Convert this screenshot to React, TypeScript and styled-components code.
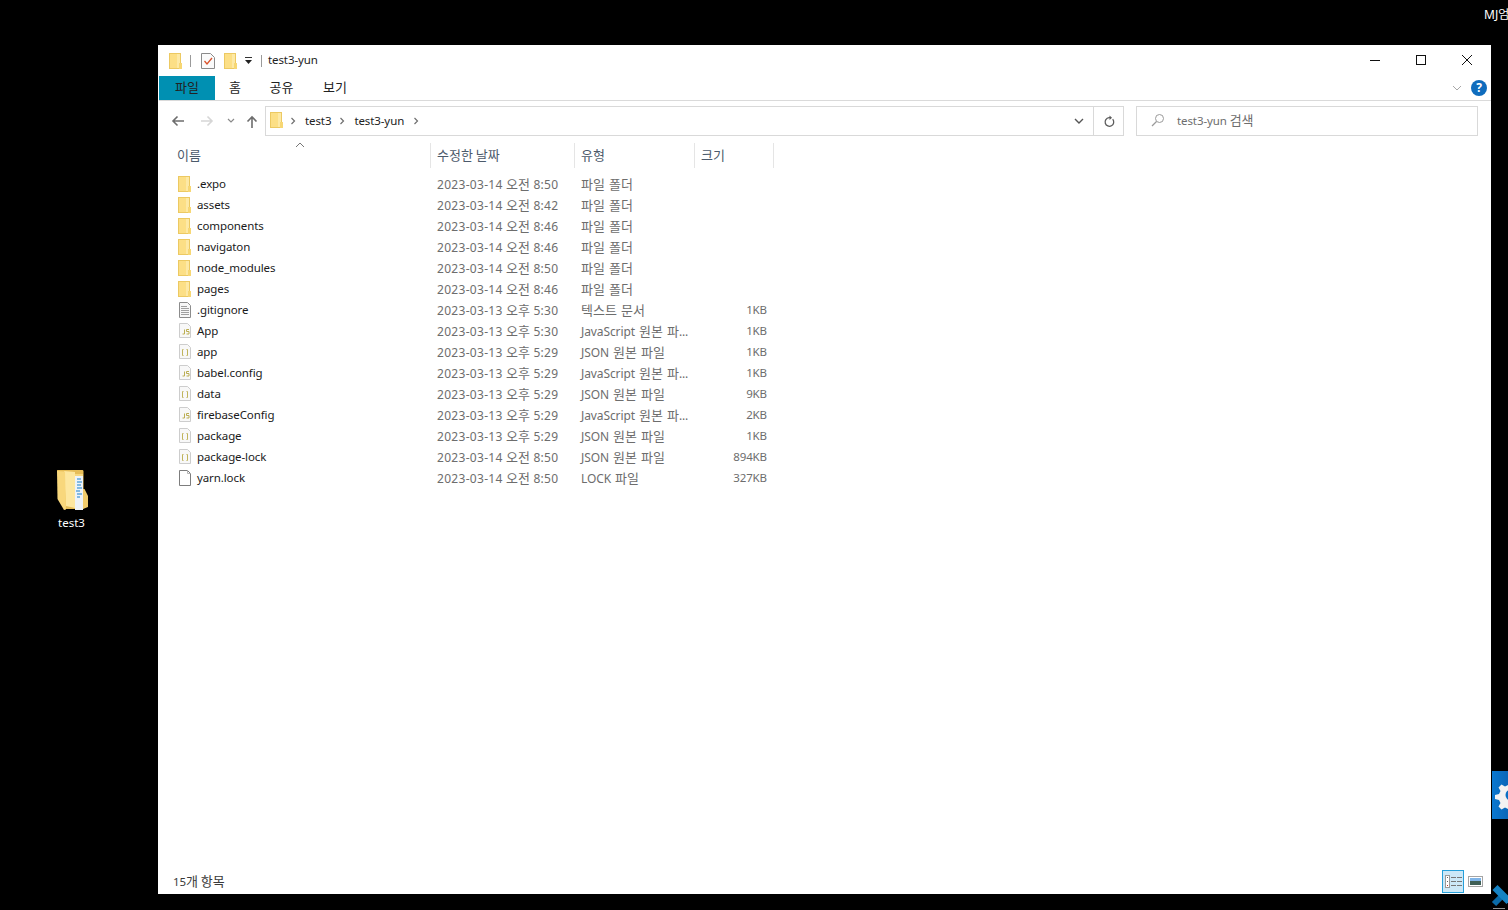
import React from "react";
import styled, { createGlobalStyle } from "styled-components";

const FONT = `"Noto Sans", "Noto Sans CJK KR", sans-serif`;

const Global = createGlobalStyle`
  html, body { margin: 0; padding: 0; background: #000; }
  body { width: 1508px; height: 910px; overflow: hidden; font-family: ${FONT}; }
  #root { width: 1508px; height: 910px; }
`;

const Desktop = styled.div`
  position: relative;
  width: 1508px;
  height: 910px;
  background: #000;
  overflow: hidden;
`;

const UserName = styled.div`
  position: absolute;
  left: 1484px;
  top: 5px;
  color: #fff;
  font-size: 12px;
  white-space: nowrap;
`;

const DesktopIcon = styled.div`
  position: absolute;
  left: 42px;
  top: 469px;
  width: 60px;
  display: flex;
  flex-direction: column;
  align-items: center;
  color: #fff;
  font-size: 11.5px;
  line-height: 16px;
`;

const DesktopLabel = styled.span`
  margin-top: 4px;
  margin-left: -1px;
`;

const GearTab = styled.div`
  position: absolute;
  left: 1492px;
  top: 771px;
  width: 16px;
  height: 48px;
  background: linear-gradient(90deg, #0a78d0, #0a66b8);
  overflow: hidden;
`;

const CornerMark = styled.div`
  position: absolute;
  left: 1491px;
  top: 884px;
  width: 17px;
  height: 26px;
`;

const Window = styled.div`
  position: absolute;
  left: 158px;
  top: 45px;
  width: 1333px;
  height: 849px;
  background: #fff;
  display: flex;
  flex-direction: column;
  color: #1a1a1a;
  font-size: 11.5px;
  letter-spacing: -0.1px;
`;

const Hangul = styled.span`
  font-family: "Noto Sans CJK KR", "Noto Sans", sans-serif;
  font-size: 13px;
  letter-spacing: 0;
  line-height: 1;
`;

const Mixed = ({ text }: { text: string }) => (
  <>
    {text.split(/([\uAC00-\uD7A3]+)/).map((part, i) =>
      i % 2 === 1 ? <Hangul key={i}>{part}</Hangul> : part
    )}
  </>
);

const TitleBar = styled.div`
  height: 31px;
  display: flex;
  align-items: center;
  padding-left: 11px;
  flex: none;
`;

const QuickSep = styled.span<{ $ml: number; $mr: number }>`
  width: 1px;
  height: 12px;
  background: #9a9a9a;
  margin-left: ${(p) => p.$ml}px;
  margin-right: ${(p) => p.$mr}px;
`;

const QuickIcon = styled.span<{ $mr?: number }>`
  display: flex;
  margin-right: ${(p) => p.$mr ?? 0}px;
`;

const TitleText = styled.span`
  color: #222;
  padding-bottom: 2px;
`;

const WindowControls = styled.div`
  margin-left: auto;
  display: flex;
  margin-top: -2px;
  padding-right: 1px;
`;

const WindowButton = styled.span`
  width: 46px;
  height: 30px;
  display: flex;
  align-items: center;
  justify-content: center;
`;

const RibbonTabs = styled.div`
  height: 24px;
  flex: none;
  display: flex;
  align-items: stretch;
  margin-left: 1px;
  border-bottom: 1px solid #dadada;
`;

const Tab = styled.span<{ $w: number; $active?: boolean }>`
  width: ${(p) => p.$w}px;
  display: flex;
  align-items: center;
  justify-content: center;
  padding-bottom: 4px;
  box-sizing: border-box;
  background: ${(p) => (p.$active ? "#0090b2" : "transparent")};
  color: #222;
`;

const RibbonRight = styled.div`
  margin-left: auto;
  display: flex;
  align-items: center;
  gap: 9px;
  padding-right: 4px;
`;

const AddressRow = styled.div`
  height: 30px;
  margin-top: 5px;
  flex: none;
  display: flex;
  align-items: stretch;
`;

const NavButtons = styled.div`
  width: 107px;
  box-sizing: border-box;
  flex: none;
  display: flex;
  align-items: center;
  padding-left: 13px;
  gap: 7px;
`;

const AddressBox = styled.div`
  width: 859px;
  box-sizing: border-box;
  border: 1px solid #d9d9d9;
  display: flex;
  align-items: center;
  padding-left: 4px;
  padding-bottom: 2px;
  flex: none;
`;

const Crumb = styled.span`
  color: #222;
  white-space: nowrap;
`;

const CrumbChevron = styled.span<{ $ml: number }>`
  display: flex;
  margin: 1px 9px 0 ${(p) => p.$ml}px;
`;

const AddressEnd = styled.div`
  margin-left: auto;
  display: flex;
  align-items: stretch;
  align-self: stretch;
  margin-bottom: -2px;
`;

const AddressDrop = styled.span`
  width: 28px;
  display: flex;
  align-items: center;
  justify-content: center;
`;

const AddressRefresh = styled.span`
  width: 29px;
  border-left: 1px solid #d9d9d9;
  display: flex;
  align-items: center;
  justify-content: center;
`;

const SearchBox = styled.div`
  width: 342px;
  margin-left: 12px;
  box-sizing: border-box;
  border: 1px solid #d9d9d9;
  display: flex;
  align-items: center;
  padding-left: 14px;
  padding-bottom: 2px;
  gap: 12px;
  color: #6d6d6d;
  flex: none;
`;

const ListArea = styled.div`
  flex: 1;
  margin-top: 7px;
  padding-left: 13px;
  position: relative;
`;

const HeaderRow = styled.div`
  display: grid;
  grid-template-columns: 259px 144px 120px 80px;
  grid-template-rows: 25px;
  width: 603px;
  height: 25px;
  margin-bottom: 6px;
`;

const HeaderCell = styled.div<{ $first?: boolean; $sep?: boolean }>`
  padding-left: 6px;
  border-left: ${(p) => (p.$first ? "none" : "1px solid #e5e5e5")};
  border-right: ${(p) => (p.$sep ? "1px solid #e5e5e5" : "none")};
  color: #4c5a6b;
  line-height: 26px;
`;

const SortCaret = styled.span`
  position: absolute;
  left: 137px;
  top: -1px;
  display: flex;
`;

const FileRow = styled.div`
  display: grid;
  grid-template-columns: 259px 144px 120px 80px;
  grid-template-rows: 21px;
  width: 603px;
  height: 21px;
  align-items: center;
  line-height: 21px;
`;

const NameCell = styled.div`
  display: flex;
  align-items: center;
  padding-left: 7px;
  padding-bottom: 2px;
  gap: 6px;
  color: #1a1a1a;
`;

const IconSlot = styled.span`
  width: 13px;
  height: 16px;
  display: flex;
  align-items: center;
  justify-content: center;
  flex: none;
`;

const InfoCell = styled.div<{ $date?: boolean }>`
  padding-left: 7px;
  color: #6d6d6d;
  white-space: nowrap;
  font-size: 12px;
  letter-spacing: ${(p) => (p.$date ? "0.3px" : "-0.1px")};
  word-spacing: ${(p) => (p.$date ? "0" : "1px")};
`;

const SizeCell = styled.div`
  padding-right: 7px;
  padding-bottom: 2px;
  text-align: right;
  color: #6d6d6d;
`;

const StatusBar = styled.div`
  height: 25px;
  flex: none;
  display: flex;
  align-items: center;
  padding-left: 15px;
  box-sizing: border-box;
  color: #3a3a3a;
`;

const ViewButtons = styled.div`
  margin-left: auto;
  display: flex;
  align-items: center;
  padding-right: 8px;
  gap: 4px;
`;

const ViewButton = styled.span<{ $active?: boolean }>`
  width: ${(p) => (p.$active ? 22 : 15)}px;
  height: 23px;
  box-sizing: border-box;
  display: flex;
  align-items: center;
  justify-content: center;
  background: ${(p) => (p.$active ? "#cce8f7" : "transparent")};
  border: ${(p) => (p.$active ? "1px solid #26a0da" : "none")};
`;

const FolderIcon = () => (
  <svg width="13" height="16" viewBox="0 0 13 16">
    <rect x="0.5" y="0.5" width="11" height="15" fill="#fde9a6" stroke="#ecc962" />
    <rect x="1" y="1" width="7" height="14" fill="#fcdf86" />
    <rect x="10" y="10" width="3" height="6" fill="#f7d774" />
  </svg>
);

const TextIcon = () => (
  <svg width="12" height="16" viewBox="0 0 12 16">
    <path d="M.5.5h8l3 3v12H.5z" fill="#f7f7f7" stroke="#8c8c8c" />
    <path d="M2 4.500h6M2 6.500h8M2 8.500h8M2 10.500h8M2 12.500h8" stroke="#a0a0a0" />
  </svg>
);

const JsIcon = () => (
  <svg width="12" height="15" viewBox="0 0 12 15">
    <path d="M.5.5h8l3 3v11H.5z" fill="#f8f8f8" stroke="#cdcdcd" />
    <path d="M5.500 6.500v4.500h-2M10 6.500H7.500v2H10V11H7.500" fill="none" stroke="#bcae52" strokeWidth="1" />
  </svg>
);

const JsonIcon = () => (
  <svg width="12" height="15" viewBox="0 0 12 15">
    <path d="M.5.5h8l3 3v11H.5z" fill="#f8f8f8" stroke="#cdcdcd" />
    <path d="M4.500 5.500H3.500v6h1M7.500 5.500h1v6h-1" fill="none" stroke="#c0b45c" strokeWidth="1" />
  </svg>
);

const BlankIcon = () => (
  <svg width="12" height="16" viewBox="0 0 12 16">
    <path d="M.5.5h8l3 3v12H.5z" fill="#fff" stroke="#7d7d7d" />
    <path d="M8.500 .5v3h3" fill="none" stroke="#b5b5b5" />
  </svg>
);

const ICONS = { folder: FolderIcon, text: TextIcon, js: JsIcon, json: JsonIcon, blank: BlankIcon };

type Kind = keyof typeof ICONS;
type FileEntry = { name: string; date: string; type: string; size: string; kind: Kind };

const JS = "JavaScript 원본 파...";
const JSON_T = "JSON 원본 파일";
const DIR = "파일 폴더";

const FILES: FileEntry[] = [
  { name: ".expo", date: "2023-03-14 오전 8:50", type: DIR, size: "", kind: "folder" },
  { name: "assets", date: "2023-03-14 오전 8:42", type: DIR, size: "", kind: "folder" },
  { name: "components", date: "2023-03-14 오전 8:46", type: DIR, size: "", kind: "folder" },
  { name: "navigaton", date: "2023-03-14 오전 8:46", type: DIR, size: "", kind: "folder" },
  { name: "node_modules", date: "2023-03-14 오전 8:50", type: DIR, size: "", kind: "folder" },
  { name: "pages", date: "2023-03-14 오전 8:46", type: DIR, size: "", kind: "folder" },
  { name: ".gitignore", date: "2023-03-13 오후 5:30", type: "텍스트 문서", size: "1KB", kind: "text" },
  { name: "App", date: "2023-03-13 오후 5:30", type: JS, size: "1KB", kind: "js" },
  { name: "app", date: "2023-03-13 오후 5:29", type: JSON_T, size: "1KB", kind: "json" },
  { name: "babel.config", date: "2023-03-13 오후 5:29", type: JS, size: "1KB", kind: "js" },
  { name: "data", date: "2023-03-13 오후 5:29", type: JSON_T, size: "9KB", kind: "json" },
  { name: "firebaseConfig", date: "2023-03-13 오후 5:29", type: JS, size: "2KB", kind: "js" },
  { name: "package", date: "2023-03-13 오후 5:29", type: JSON_T, size: "1KB", kind: "json" },
  { name: "package-lock", date: "2023-03-14 오전 8:50", type: JSON_T, size: "894KB", kind: "json" },
  { name: "yarn.lock", date: "2023-03-14 오전 8:50", type: "LOCK 파일", size: "327KB", kind: "blank" },
];

const Chevron = () => (
  <svg width="6" height="8" viewBox="0 0 6 8">
    <path d="M1.5 1l3 3-3 3" fill="none" stroke="#707070" strokeWidth="1.2" />
  </svg>
);

export default function App() {
  return (
    <Desktop>
      <Global />
      <UserName>MJ엄</UserName>

      <DesktopIcon>
        <svg width="32" height="42" viewBox="0 0 32 42">
          <path d="M1 1h25c1 0 1.500 .5 1.500 1.500V40H8z" fill="#e6bd58" />
          <rect x="18" y="5" width="9" height="34" fill="#f6d77e" />
          <rect x="19" y="7" width="8" height="34" fill="#eef3f8" />
          <path d="M21 10h4M21 13h5M21 16h4M21 19h5M20 22h4M21 25h5M21 28h3" stroke="#5fa6db" strokeWidth="1.300" />
          <path d="M8 2l11 1v36L10 37z" fill="#fde7a0" />
          <path d="M1 2l8 .5 1 38-2 0.500L1.500 30z" fill="#f8d77c" />
          <path d="M27 20h1.500l3.500 7v11l-5 2z" fill="#f0cb6c" />
        </svg>
        <DesktopLabel>test3</DesktopLabel>
      </DesktopIcon>

      <GearTab>
        <svg width="16" height="48" viewBox="0 0 16 48">
          <path
            d="M12 11l4 0 1 4 3 1.500 3.500-2 3 3-2 3.500 1.500 3 4 1v4l-4 1-1.500 3 2 3.500-3 3-3.500-2-3 1.500-1 4h-4l-1-4-3-1.500-3.500 2-3-3 2-3.500-1.500-3-4-1v-4l4-1 1.500-3-2-3.500 3-3 3.500 2 3-1.500z"
            fill="#f2f2f2"
            transform="translate(5 -1)"
          />
          <circle cx="19" cy="24" r="5.500" fill="#0a6fc4" />
        </svg>
      </GearTab>

      <CornerMark>
        <svg width="17" height="26" viewBox="0 0 17 26">
          <path d="M3 20l7-7" stroke="#0a6aa8" strokeWidth="6" />
          <path d="M4 3.500l14 14" stroke="#1683c4" strokeWidth="7" />
          <rect x="2" y="24" width="12" height="1" fill="#8f8f8f" />
        </svg>
      </CornerMark>

      <Window>
        <TitleBar>
          <QuickIcon>
            <FolderIcon />
          </QuickIcon>
          <QuickSep $ml={8} $mr={10} />
          <QuickIcon $mr={9}>
            <svg width="14" height="16" viewBox="0 0 14 16">
              <path d="M.5.5h9l4 4v11H.5z" fill="#fafafa" stroke="#8a8a8a" />
              <path d="M3.500 8l2.500 3 5-6" fill="none" stroke="#d9522b" strokeWidth="1.300" />
            </svg>
          </QuickIcon>
          <QuickIcon>
            <FolderIcon />
          </QuickIcon>
          <QuickIcon>
            <svg width="24" height="10" viewBox="0 0 24 10">
              <path d="M8 1.500h7" stroke="#333" />
              <path d="M8 4h7l-3.500 4z" fill="#222" />
            </svg>
          </QuickIcon>
          <QuickSep $ml={0} $mr={6} />
          <TitleText>test3-yun</TitleText>
          <WindowControls>
            <WindowButton>
              <svg width="10" height="10" viewBox="0 0 10 10">
                <path d="M0 5.500h10" stroke="#111" />
              </svg>
            </WindowButton>
            <WindowButton>
              <svg width="10" height="10" viewBox="0 0 10 10">
                <rect x="0.500" y="0.500" width="9" height="9" fill="none" stroke="#111" />
              </svg>
            </WindowButton>
            <WindowButton>
              <svg width="10" height="10" viewBox="0 0 10 10">
                <path d="M0 0l10 10M10 0L0 10" stroke="#111" />
              </svg>
            </WindowButton>
          </WindowControls>
        </TitleBar>

        <RibbonTabs>
          <Tab $w={56} $active>
            <Mixed text="파일" />
          </Tab>
          <Tab $w={40}>
            <Mixed text="홈" />
          </Tab>
          <Tab $w={53}>
            <Mixed text="공유" />
          </Tab>
          <Tab $w={54}>
            <Mixed text="보기" />
          </Tab>
          <RibbonRight>
            <svg width="10" height="6" viewBox="0 0 10 6">
              <path d="M1 1l4 4 4-4" fill="none" stroke="#a8a8a8" />
            </svg>
            <svg width="16" height="16" viewBox="0 0 16 16">
              <circle cx="8" cy="8" r="8" fill="#0f6cbd" />
              <text x="8" y="12" textAnchor="middle" fontSize="12" fontWeight="700" fill="#fff" fontFamily="Noto Sans, sans-serif">
                ?
              </text>
            </svg>
          </RibbonRight>
        </RibbonTabs>

        <AddressRow>
          <NavButtons>
            <svg width="14" height="12" viewBox="0 0 14 12">
              <path d="M13 6H2M6.500 1.500L2 6l4.500 4.500" fill="none" stroke="#6d6d6d" strokeWidth="1.600" />
            </svg>
            <svg width="14" height="12" viewBox="0 0 14 12" style={{ marginLeft: 8 }}>
              <path d="M1 6h11M7.500 1.500L12 6l-4.500 4.500" fill="none" stroke="#d6d6d6" strokeWidth="1.600" />
            </svg>
            <svg width="8" height="6" viewBox="0 0 8 6" style={{ marginLeft: 6 }}>
              <path d="M1 1l3 3 3-3" fill="none" stroke="#8a8a8a" strokeWidth="1.200" />
            </svg>
            <svg width="12" height="14" viewBox="0 0 12 14" style={{ marginLeft: 4, marginTop: 2 }}>
              <path d="M6 13V2M1.500 6.500L6 2l4.500 4.500" fill="none" stroke="#6d6d6d" strokeWidth="1.600" />
            </svg>
          </NavButtons>
          <AddressBox>
            <FolderIcon />
            <CrumbChevron $ml={7}>
              <Chevron />
            </CrumbChevron>
            <Crumb>test3</Crumb>
            <CrumbChevron $ml={8}>
              <Chevron />
            </CrumbChevron>
            <Crumb>test3-yun</Crumb>
            <CrumbChevron $ml={9}>
              <Chevron />
            </CrumbChevron>
            <AddressEnd>
              <AddressDrop>
                <svg width="10" height="6" viewBox="0 0 10 6">
                  <path d="M1 1l4 4 4-4" fill="none" stroke="#555" strokeWidth="1.400" />
                </svg>
              </AddressDrop>
              <AddressRefresh>
                <svg width="12" height="13" viewBox="0 0 12 13">
                  <path d="M9.700 4.200A4.300 4.300 0 1 1 6 2.700H8" fill="none" stroke="#5c5c5c" strokeWidth="1.300" />
                  <path d="M6.500 .5L9 2.700 6.500 5z" fill="#5c5c5c" />
                </svg>
              </AddressRefresh>
            </AddressEnd>
          </AddressBox>
          <SearchBox>
            <svg width="14" height="14" viewBox="0 0 14 14">
              <circle cx="8.500" cy="5.500" r="4" fill="none" stroke="#9a9a9a" />
              <path d="M5.500 8.500L1 13" stroke="#9a9a9a" strokeWidth="1.200" />
            </svg>
            <span>
              <Mixed text="test3-yun 검색" />
            </span>
          </SearchBox>
        </AddressRow>

        <ListArea>
          <SortCaret>
            <svg width="10" height="6" viewBox="0 0 10 6">
              <path d="M1 5l4-4 4 4" fill="none" stroke="#777" />
            </svg>
          </SortCaret>
          <HeaderRow>
            <HeaderCell $first>
              <Mixed text="이름" />
            </HeaderCell>
            <HeaderCell>
              <Mixed text="수정한 날짜" />
            </HeaderCell>
            <HeaderCell>
              <Mixed text="유형" />
            </HeaderCell>
            <HeaderCell $sep>
              <Mixed text="크기" />
            </HeaderCell>
          </HeaderRow>
          {FILES.map((f) => {
            const Icon = ICONS[f.kind];
            return (
              <FileRow key={f.name}>
                <NameCell>
                  <IconSlot>
                    <Icon />
                  </IconSlot>
                  {f.name}
                </NameCell>
                <InfoCell $date>
                  <Mixed text={f.date} />
                </InfoCell>
                <InfoCell>
                  <Mixed text={f.type} />
                </InfoCell>
                <SizeCell>{f.size}</SizeCell>
              </FileRow>
            );
          })}
        </ListArea>

        <StatusBar>
          <span>
            <Mixed text="15개 항목" />
          </span>
          <ViewButtons>
            <ViewButton $active>
              <svg width="17" height="13" viewBox="0 0 17 13">
                <rect x="0.500" y="0.500" width="4" height="12" fill="#fff" stroke="#9a9a9a" />
                <path d="M2 2.500h1M2 6.500h1" stroke="#666" />
                <path d="M2 10.500h1" stroke="#c0392b" />
                <path d="M6 2.500h5M12 2.500h5M6 6.500h5M12 6.500h5M6 10.500h5M12 10.500h5" stroke="#777" />
              </svg>
            </ViewButton>
            <ViewButton>
              <svg width="15" height="11" viewBox="0 0 15 11">
                <rect x="0.500" y="0.500" width="14" height="10" fill="#fff" stroke="#a5a5a5" />
                <rect x="2" y="2" width="11" height="3" fill="#7fb4e8" />
                <rect x="2" y="5" width="11" height="4" fill="#3f5f55" />
              </svg>
            </ViewButton>
          </ViewButtons>
        </StatusBar>
      </Window>
    </Desktop>
  );
}
